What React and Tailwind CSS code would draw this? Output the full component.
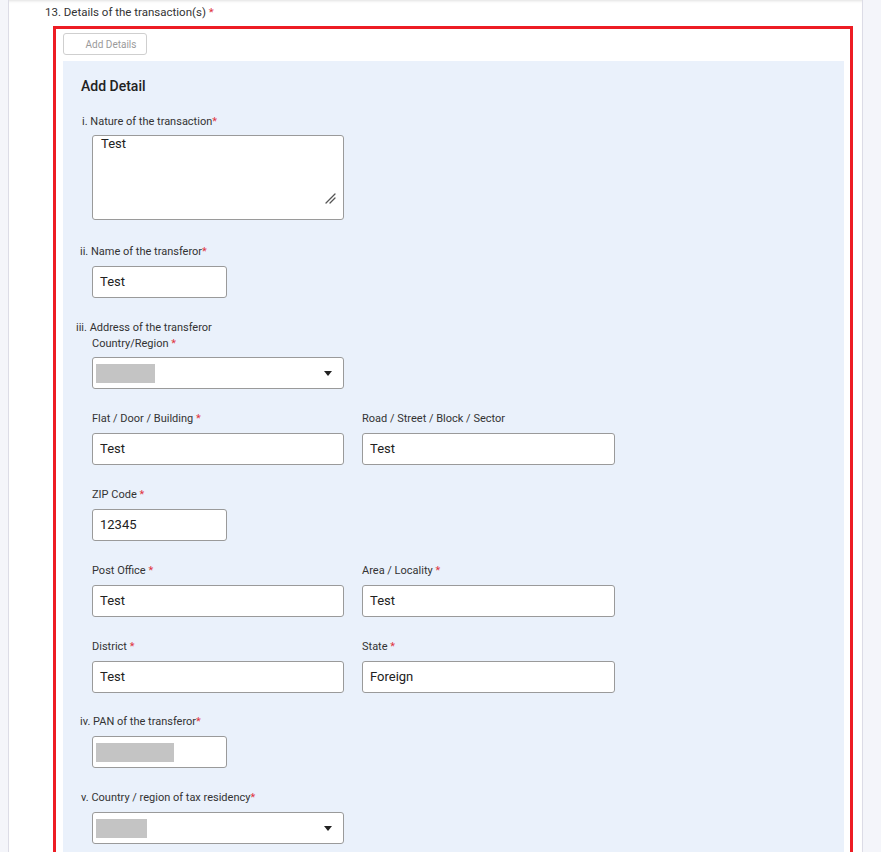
import React from 'react';

const FONT = { fontFamily: 'Roboto, "Liberation Sans", sans-serif' };

const Req = () => <span className="text-[#e0343f]">*</span>;

const Label = ({ children, className = '' }) => (
  <div className={`text-[11px] leading-[14px] text-[#333] ${className}`}>{children}</div>
);

const TextInput = ({ value, w = 'w-[252px]' }) => (
  <div className={`${w} h-[32px] flex items-center rounded-[3px] border border-[#9a9a9a] bg-white pl-[7px] text-[13px] text-[#222]`}>
    {value}
  </div>
);

const Blank = ({ w = 'w-[135px]', block = 'w-[78px]' }) => (
  <div className={`${w} h-[32px] flex items-center rounded-[3px] border border-[#9a9a9a] bg-white pl-[3px]`}>
    <div className={`${block} h-[19px] bg-[#c4c4c4]`} />
  </div>
);

const Select = ({ block = 'w-[60px]' }) => (
  <div className="w-[252px] h-[32px] flex items-center justify-between rounded-[3px] border border-[#9a9a9a] bg-white pl-[3px] pr-[11px]">
    <div className={`${block} h-[19px] bg-[#c4c4c4]`} />
    <svg width="8" height="5" viewBox="0 0 8 5"><path d="M0 0h8L4 5z" fill="#222" /></svg>
  </div>
);

// A labelled field; labels sit 7px above the box.
const Field = ({ label, children }) => (
  <div className="flex flex-col gap-[7px]">
    <Label>{label}</Label>
    {children}
  </div>
);

export default function App() {
  return (
    <div className="min-h-[852px] bg-[#f4f5fa] pl-[8px] pr-[18px]" style={FONT}>
      <div className="min-h-[852px] bg-white border-x border-[#dcdce6] pl-[36px] pr-[9px] pt-[5px] shadow-[inset_0_3px_3px_-2px_rgba(0,0,0,0.12)]">
        <div className="text-[11.5px] leading-[15px] text-[#333]">
          13. Details of the transaction(s) <Req />
        </div>

        <div className="ml-[8px] mt-[6px] border-[3px] border-b-0 border-[#ed1c24] pt-[4px] pl-[7px] pr-[6px]">
          <button className="block h-[22px] w-[84px] rounded-[3px] border border-[#cfcfcf] bg-white pl-[12px] text-[10px] text-[#9a9a9a]">
            Add Details
          </button>

          <div className="mt-[6px] bg-[#eaf1fb] px-[18px] pt-[16px] pb-[10px]">
            <h2 className="text-[14px] leading-[18px] font-medium text-[#222]">Add Detail</h2>

            <Label className="mt-[20px] ml-[1px]">i. Nature of the transaction<Req /></Label>
            <div className="relative ml-[11px] mt-[6px] w-[252px]">
              <textarea
                defaultValue="Test"
                className="block w-[252px] h-[85px] resize-none rounded-[3px] border border-[#9a9a9a] bg-white pl-[8px] pt-0 text-[13px] leading-[15px] text-[#222] outline-none"
              />
              <svg className="absolute right-[8px] bottom-[16px]" width="11" height="11" viewBox="0 0 11 11">
                <path d="M1 10L10 1M5 10L10 5" stroke="#555" strokeWidth="1.3" strokeLinecap="round" />
              </svg>
            </div>

            <Label className="mt-[25px] ml-[-1px]">ii. Name of the transferor<Req /></Label>
            <div className="ml-[11px] mt-[7px]"><TextInput value="Test" w="w-[135px]" /></div>

            <Label className="mt-[23px] ml-[-5px]">iii. Address of the transferor</Label>
            <div className="ml-[11px] flex flex-col">
              <Label className="mt-[2px]">Country/Region <Req /></Label>
              <div className="mt-[6px]"><Select block="w-[59px]" /></div>

              <div className="mt-[23px] grid grid-cols-[252px_253px] gap-x-[18px] gap-y-[23px]">
                <Field label={<>Flat / Door / Building <Req /></>}><TextInput value="Test" /></Field>
                <Field label="Road / Street / Block / Sector"><TextInput value="Test" w="w-[253px]" /></Field>
                <Field label={<>ZIP Code <Req /></>}><TextInput value="12345" w="w-[135px]" /></Field>
                <div />
                <Field label={<>Post Office <Req /></>}><TextInput value="Test" /></Field>
                <Field label={<>Area / Locality <Req /></>}><TextInput value="Test" w="w-[253px]" /></Field>
                <Field label={<>District <Req /></>}><TextInput value="Test" /></Field>
                <Field label={<>State <Req /></>}><TextInput value="Foreign" w="w-[253px]" /></Field>
              </div>
            </div>

            <Label className="mt-[22px] ml-[-1px]">iv. PAN of the transferor<Req /></Label>
            <div className="ml-[11px] mt-[7px]"><Blank /></div>

            <Label className="mt-[23px]">v. Country / region of tax residency<Req /></Label>
            <div className="ml-[11px] mt-[7px]"><Select block="w-[51px]" /></div>
          </div>
        </div>
      </div>
    </div>
  );
}
